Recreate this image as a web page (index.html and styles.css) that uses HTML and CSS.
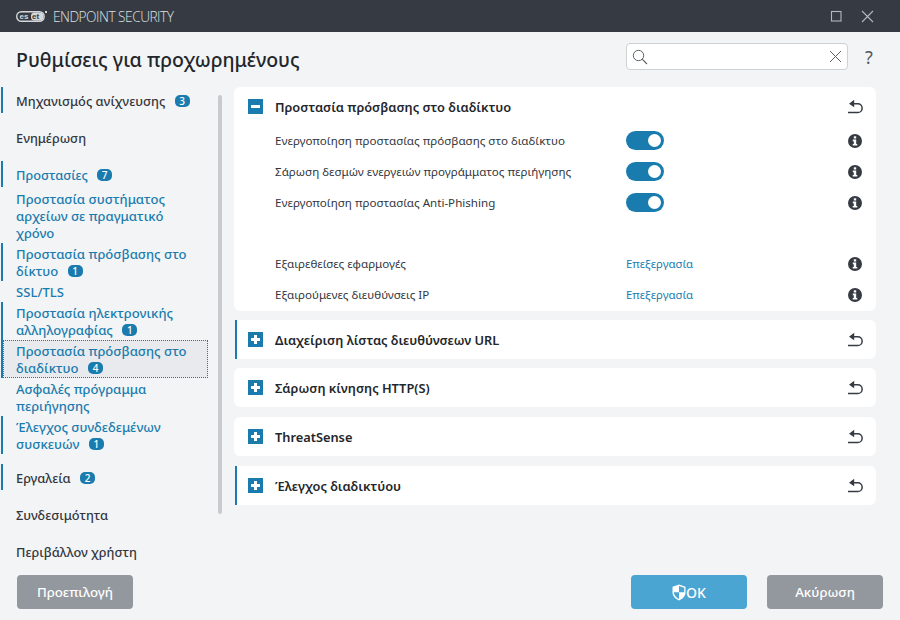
FILE: index.html
```html
<!DOCTYPE html>
<html lang="el">
<head>
  <meta charset="UTF-8">
  <title>ESET Endpoint Security</title>
  <link rel="stylesheet" href="styles.css">
</head>
<body>
  <svg class="defs" width="0" height="0">
    <symbol id="undo" viewBox="0 0 16 16">
      <path d="M7.200 .8L2 4.800l5.200 3.400z" fill="#363b43"/>
      <path d="M5 4.800h5.800a4.350 4.350 0 0 1 0 8.700H1" fill="none" stroke="#363b43" stroke-width="1.500"/>
    </symbol>
    <symbol id="info" viewBox="0 0 14 14">
      <circle cx="7" cy="7" r="7" fill="#363b43"/>
      <rect x="5.800" y="2.300" width="2.400" height="2.200" fill="#fff"/>
      <path d="M4.800 5.600h3.400v4.300h1.100v1.600H4.700V9.900h1.100V7.200h-1z" fill="#fff"/>
    </symbol>
  </svg>

  <div class="window">
    <div class="titlebar">
      <div class="brand">
        <svg class="logo" width="31" height="12" viewBox="0 0 31 12">
          <rect x="0.700" y="1.700" width="27.500" height="9.600" rx="4.800" fill="none" stroke="#d5d7da" stroke-width="1.400"/>
          <rect x="15" y="2.500" width="12.500" height="8" rx="3.500" fill="#d5d7da"/>
          <path d="M29 1h2v2h-2z" fill="#d5d7da"/>
          <text x="3.500" y="9.200" class="logo-text">es</text>
          <text x="16" y="9.200" class="logo-text logo-text-dark">et</text>
        </svg>
        <span class="product">ENDPOINT SECURITY</span>
      </div>
      <div class="win-buttons">
        <svg width="12" height="12" viewBox="0 0 12 12"><rect x="1.500" y="1.500" width="9.500" height="9.500" fill="none" stroke="#b4b6ba" stroke-width="1.100"/></svg>
        <svg width="13" height="13" viewBox="0 0 13 13"><path d="M1 1l11 11M12 1L1 12" fill="none" stroke="#b4b6ba" stroke-width="1.100"/></svg>
      </div>
    </div>

    <header class="header">
      <h1>Ρυθμίσεις για προχωρημένους</h1>
      <div class="search">
        <svg width="16" height="16" viewBox="0 0 16 16"><circle cx="6.500" cy="6.500" r="5.200" fill="none" stroke="#5c6065" stroke-width="1"/><path d="M10.200 10.200l4.800 4.800" stroke="#5c6065" stroke-width="1.100"/></svg>
        <svg width="13" height="13" viewBox="0 0 13 13"><path d="M1 1l11 11M12 1L1 12" fill="none" stroke="#5c6065" stroke-width="1"/></svg>
      </div>
      <span class="help">?</span>
    </header>

    <div class="main">
      <nav class="sidebar">
        <div class="nav-list">
          <a class="nav-top marked">Μηχανισμός ανίχνευσης <span class="badge">3</span></a>
          <a class="nav-top">Ενημέρωση</a>
          <a class="nav-top marked link">Προστασίες <span class="badge">7</span></a>
          <a class="nav-sub">Προστασία συστήματος αρχείων σε πραγματικό χρόνο</a>
          <a class="nav-sub marked">Προστασία πρόσβασης στο δίκτυο <span class="badge">1</span></a>
          <a class="nav-sub">SSL/TLS</a>
          <a class="nav-sub marked">Προστασία ηλεκτρονικής αλληλογραφίας <span class="badge">1</span></a>
          <a class="nav-sub marked selected">Προστασία πρόσβασης στο διαδίκτυο <span class="badge">4</span></a>
          <a class="nav-sub">Ασφαλές πρόγραμμα περιήγησης</a>
          <a class="nav-sub marked">Έλεγχος συνδεδεμένων συσκευών <span class="badge">1</span></a>
          <a class="nav-top marked after-sub">Εργαλεία <span class="badge">2</span></a>
          <a class="nav-top">Συνδεσιμότητα</a>
          <a class="nav-top">Περιβάλλον χρήστη</a>
        </div>
        <div class="scrollbar"></div>
      </nav>

      <section class="content">
        <div class="card">
          <div class="card-head">
            <span class="toggle-box minus"></span>
            <h2>Προστασία πρόσβασης στο διαδίκτυο</h2>
            <svg class="undo" width="16" height="16"><use href="#undo"/></svg>
          </div>
          <div class="rows">
            <div class="row">
              <span class="row-label">Ενεργοποίηση προστασίας πρόσβασης στο διαδίκτυο</span>
              <span class="switch"></span>
              <svg class="info" width="14" height="14"><use href="#info"/></svg>
            </div>
            <div class="row">
              <span class="row-label">Σάρωση δεσμών ενεργειών προγράμματος περιήγησης</span>
              <span class="switch"></span>
              <svg class="info" width="14" height="14"><use href="#info"/></svg>
            </div>
            <div class="row">
              <span class="row-label">Ενεργοποίηση προστασίας Anti-Phishing</span>
              <span class="switch"></span>
              <svg class="info" width="14" height="14"><use href="#info"/></svg>
            </div>
            <div class="row row-gap">
              <span class="row-label">Εξαιρεθείσες εφαρμογές</span>
              <a class="edit">Επεξεργασία</a>
              <svg class="info" width="14" height="14"><use href="#info"/></svg>
            </div>
            <div class="row">
              <span class="row-label">Εξαιρούμενες διευθύνσεις IP</span>
              <a class="edit">Επεξεργασία</a>
              <svg class="info" width="14" height="14"><use href="#info"/></svg>
            </div>
          </div>
        </div>

        <div class="card marked-card">
          <div class="card-head">
            <span class="toggle-box plus"></span>
            <h2>Διαχείριση λίστας διευθύνσεων URL</h2>
            <svg class="undo" width="16" height="16"><use href="#undo"/></svg>
          </div>
        </div>
        <div class="card">
          <div class="card-head">
            <span class="toggle-box plus"></span>
            <h2>Σάρωση κίνησης HTTP(S)</h2>
            <svg class="undo" width="16" height="16"><use href="#undo"/></svg>
          </div>
        </div>
        <div class="card">
          <div class="card-head">
            <span class="toggle-box plus"></span>
            <h2>ThreatSense</h2>
            <svg class="undo" width="16" height="16"><use href="#undo"/></svg>
          </div>
        </div>
        <div class="card marked-card">
          <div class="card-head">
            <span class="toggle-box plus"></span>
            <h2>Έλεγχος διαδικτύου</h2>
            <svg class="undo" width="16" height="16"><use href="#undo"/></svg>
          </div>
        </div>
      </section>
    </div>

    <footer class="footer">
      <button class="btn btn-grey">Προεπιλογή</button>
      <div class="footer-right">
        <button class="btn btn-ok">
          <svg width="14" height="17" viewBox="0 0 14 17"><path d="M7 .5l6.500 2.200v5.600c0 3.800-2.800 6.600-6.500 8.200C3.300 14.900.5 12.100.5 8.300V2.700z" fill="#fff"/><path d="M7 2l5.200 1.700v4.600H7zM7 8.300V15c-2.800-1.400-4.800-3.600-5.200-6.700z" fill="#4ba5d3"/></svg>OK
        </button>
        <button class="btn btn-grey">Ακύρωση</button>
      </div>
    </footer>
  </div>
</body>
</html>
```

FILE: styles.css
```css
:root {
  --blue: #1a7cae;
  --dark: #363b43;
  --text: #33373d;
  --bg: #f3f4f6;
}

* {
  box-sizing: border-box;
  margin: 0;
  padding: 0;
}

body {
  font-family: "Noto Sans", "Open Sans", sans-serif;
  background: var(--bg);
  color: var(--text);
}

.defs {
  display: block;
  height: 0;
}

.window {
  width: 900px;
  height: 620px;
  display: flex;
  flex-direction: column;
  overflow: hidden;
}

.titlebar {
  height: 32px;
  flex: none;
  background: var(--dark);
  display: flex;
  align-items: center;
  justify-content: space-between;
  padding: 0 26px 0 16px;
}

.brand {
  display: flex;
  align-items: center;
  gap: 6px;
}

.logo-text {
  font-family: "Liberation Sans", sans-serif;
  font-size: 8px;
  font-weight: 700;
  fill: #d5d7da;
}

.logo-text-dark {
  fill: var(--dark);
}

.product {
  font-family: "Open Sans", sans-serif;
  font-size: 13.700px;
  font-weight: 300;
  letter-spacing: -0.5px;
  color: #dfe0e2;
}

.win-buttons {
  display: flex;
  align-items: center;
  gap: 19px;
}

.header {
  height: 55px;
  flex: none;
  display: flex;
  align-items: center;
  padding: 0 20px 6px 16px;
}

.header h1 {
  flex: 1;
  margin-top: 6px;
  font-size: 19.500px;
  font-weight: 500;
  color: #23262b;
}

.search {
  width: 222px;
  height: 27px;
  background: #fff;
  border: 1px solid #cfd1d3;
  border-radius: 4px;
  display: flex;
  align-items: center;
  justify-content: space-between;
  padding: 0 5px;
}

.help {
  width: 22px;
  margin-left: 10px;
  text-align: center;
  font-size: 18px;
  color: #55595f;
}

.main {
  flex: 1;
  min-height: 0;
  display: flex;
}

.sidebar {
  width: 234px;
  flex: none;
  height: 483px;
  overflow: hidden;
  display: flex;
}

.nav-list {
  width: 208px;
  margin-right: 10px;
  flex: none;
  font-size: 12.800px;
  font-weight: 500;
  line-height: 17px;
  padding-left: 1px;
}

.nav-list a {
  display: block;
  color: var(--text);
  border-left: 2px solid transparent;
  padding-left: 13px;
  padding-right: 14px;
}

.nav-list .nav-top {
  margin-bottom: 11px;
  padding-top: 6px;
  padding-bottom: 3px;
}

.nav-list .nav-top.link,
.nav-list .nav-sub {
  color: var(--blue);
}

.nav-list .nav-top.link {
  margin-bottom: 1px;
}

.nav-list .nav-sub {
  font-size: 13.100px;
  padding-top: 3px;
  padding-bottom: 1px;
}

.nav-list a.marked {
  border-left-color: var(--blue);
}

.nav-list a.selected {
  position: relative;
  background: #e9eaed;
}

.selected::after {
  content: "";
  position: absolute;
  inset: 0;
  border: 1px dotted var(--blue);
}

.nav-top.after-sub {
  margin-top: 10px;
}

.badge {
  display: inline-block;
  min-width: 15px;
  height: 12px;
  margin-left: 6px;
  padding: 0 3px;
  border-radius: 5px;
  background: var(--blue);
  color: #fff;
  font-size: 10px;
  line-height: 12px;
  text-align: center;
  vertical-align: 1px;
}

.scrollbar {
  width: 4px;
  height: 419px;
  margin-top: 8px;
  background: #c8cacd;
  border-radius: 2px;
}

.content {
  width: 642px;
  flex: none;
  display: flex;
  flex-direction: column;
  gap: 9px;
}

.card {
  background: #fff;
  border-radius: 6px;
}

.card:nth-child(n+4) {
  margin-top: 1px;
}

.marked-card {
  margin-left: 1px;
  border-left: 2px solid var(--blue);
  border-radius: 0 6px 6px 0;
}

.card-head {
  height: 39px;
  display: flex;
  align-items: center;
  padding: 0 13px 0 14px;
}

.marked-card .card-head {
  padding-left: 11px;
}

.card-head h2 {
  flex: 1;
  margin-left: 12px;
  font-size: 12.800px;
  font-weight: 600;
  color: #23262b;
}

.toggle-box {
  width: 15px;
  height: 15px;
  margin-top: -1px;
  background: var(--blue);
  position: relative;
}

.toggle-box::before,
.plus::after {
  content: "";
  position: absolute;
  left: 3px;
  top: 6px;
  width: 9px;
  height: 3px;
  background: #fff;
}

.plus::after {
  left: 6px;
  top: 3px;
  width: 3px;
  height: 9px;
}

.rows {
  margin-top: -1px;
  padding-bottom: 1px;
}

.row {
  height: 31px;
  display: flex;
  align-items: center;
  padding: 0 14px 0 41px;
  font-size: 11.600px;
}

.row-label {
  width: 351px;
}

.switch {
  width: 38px;
  height: 19px;
  border-radius: 10px;
  background: var(--blue);
  position: relative;
}

.switch::after {
  content: "";
  position: absolute;
  right: 3px;
  top: 3px;
  width: 13px;
  height: 13px;
  border-radius: 50%;
  background: #fff;
}

.edit {
  width: 100px;
  font-size: 11.400px;
  color: var(--blue);
}

.info {
  margin-left: auto;
}

.row-gap {
  margin-top: 30px;
}

.footer {
  height: 50px;
  flex: none;
  display: flex;
  justify-content: space-between;
  padding: 5px 17px 11px;
}

.footer-right {
  display: flex;
  gap: 20px;
}

.btn {
  width: 116px;
  height: 34px;
  border: none;
  border-radius: 4px;
  font-family: inherit;
  font-size: 13.300px;
  font-weight: 500;
  color: #fff;
  display: inline-flex;
  align-items: center;
  justify-content: center;
}

.btn-grey {
  background: #93989e;
}

.btn-ok {
  background: #4ba5d3;
  font-size: 14px;
}
```
